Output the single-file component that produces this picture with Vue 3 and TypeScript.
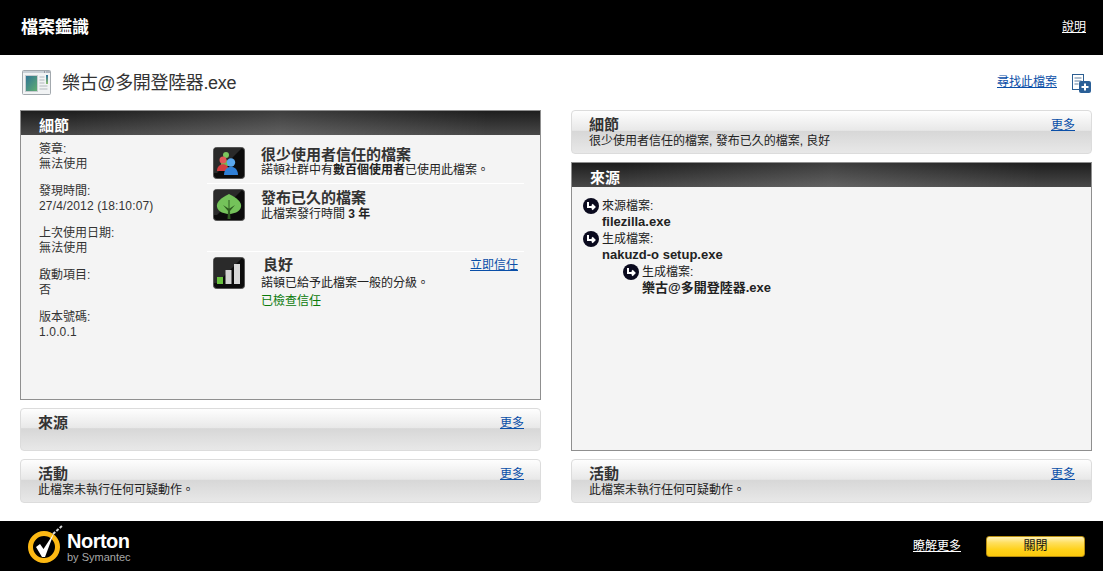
<script setup lang="ts">
interface Meta { label: string; value: string }
const meta: Meta[] = [
  { label: '簽章:', value: '無法使用' },
  { label: '發現時間:', value: '27/4/2012 (18:10:07)' },
  { label: '上次使用日期:', value: '無法使用' },
  { label: '啟動項目:', value: '否' },
  { label: '版本號碼:', value: '1.0.0.1' },
]
</script>

<template>
  <div class="page">
    <header class="top">
      <h1>檔案鑑識</h1>
      <a class="link white">說明</a>
    </header>

    <div class="titlebar">
      <svg class="fileicon" width="30" height="26" viewBox="0 0 30 26">
        <defs>
          <linearGradient id="pic" x1="0" y1="0" x2="1" y2="1">
            <stop offset="0" stop-color="#2f7296" />
            <stop offset="1" stop-color="#62b070" />
          </linearGradient>
          <linearGradient id="bar" x1="0" y1="0" x2="0" y2="1">
            <stop offset="0" stop-color="#2b6f9c" />
            <stop offset="1" stop-color="#8fbf70" />
          </linearGradient>
        </defs>
        <rect x="0.500" y="0.500" width="28" height="24" rx="1" fill="#f1f3f4" stroke="#a3a9ae" />
        <rect x="1" y="1" width="27" height="2" fill="#c9d0d6" />
        <path d="M22 2h1M24.500 2h1M26.500 2h1" stroke="#667" />
        <rect x="3.500" y="5.500" width="12" height="16" fill="url(#pic)" stroke="#c8cdd0" />
        <path d="M17.500 7h5M17.500 10h5M17.500 13h5M17.500 16h8M17.500 19h8" stroke="#b3b9be" />
        <rect x="24" y="5" width="2" height="9" fill="url(#bar)" />
      </svg>
      <span class="filename">樂古@多開登陸器.exe</span>
      <a class="link find">尋找此檔案</a>
      <svg class="addicon" width="20" height="20" viewBox="0 0 20 20">
        <rect x="0.500" y="0.500" width="11" height="15" fill="#fff" stroke="#2d5f92" />
        <path d="M2.500 4h7M2.500 7h7M2.500 10h4" stroke="#5f7f9f" />
        <rect x="7" y="7" width="12" height="12" rx="2" fill="#2a5f97" />
        <path d="M13 9.500v7M9.500 13h7" stroke="#fff" stroke-width="2" />
      </svg>
    </div>

    <main class="columns">
      <section class="col">
        <div class="panel open details">
          <h2 class="dark">細節</h2>
          <div class="detail-body">
            <dl class="meta">
              <div v-for="m in meta" :key="m.label" class="meta-item">
                <dt>{{ m.label }}</dt>
                <dd>{{ m.value }}</dd>
              </div>
            </dl>
            <div class="facts">
              <div class="fact first">
                <svg class="badge" viewBox="0 0 32 32" width="32" height="32">
                  <rect x="0.500" y="0.500" width="31" height="31" rx="3" fill="#0c0c0c" stroke="#555" />
                  <path d="M1 4a3 3 0 0 1 3-3H29 L4 26 H1Z" fill="#2a2a2a" />
                  <circle cx="13" cy="8" r="3" fill="#7cc65e" />
                  <path d="M8 17c0-5 10-5 10 0v2H8z" fill="#6dbb50" />
                  <circle cx="10" cy="13" r="3.500" fill="#e2585a" />
                  <path d="M4 24c0-9 12-9 12 0z" fill="#d33d40" />
                  <circle cx="18" cy="15.500" r="4.200" fill="#5aa8ee" />
                  <path d="M11 28c0-11 14-11 14 0z" fill="#2f7fd6" />
                </svg>
                <div class="fact-text">
                  <h3>很少使用者信任的檔案</h3>
                  <p>諾頓社群中有<b>數百個使用者</b>已使用此檔案。</p>
                </div>
              </div>
              <div class="fact second">
                <svg class="badge" viewBox="0 0 32 32" width="32" height="32">
                  <rect x="0.500" y="0.500" width="31" height="31" rx="3" fill="#0c0c0c" stroke="#555" />
                  <path d="M1 4a3 3 0 0 1 3-3H29 L4 26 H1Z" fill="#2a2a2a" />
                  <path d="M16 5 C24 9 29 13 28 18 C27 23 20 25 16 25 C12 25 5 23 4 18 C3 13 8 9 16 5Z" fill="#74c25a" />
                  <path d="M14.500 30 L15 22 L10 16 L15.500 19.500 V11 h1 V19.500 L22 16 L17 22 L17.500 30Z" fill="#2f5c22" />
                </svg>
                <div class="fact-text">
                  <h3>發布已久的檔案</h3>
                  <p>此檔案發行時間 <b>3 年</b></p>
                </div>
              </div>
              <div class="fact third">
                <svg class="badge" viewBox="0 0 32 32" width="32" height="32">
                  <rect x="0.500" y="0.500" width="31" height="31" rx="3" fill="#0c0c0c" stroke="#555" />
                  <path d="M1 4a3 3 0 0 1 3-3H29 L4 26 H1Z" fill="#2a2a2a" />
                  <rect x="4" y="20" width="6" height="7" fill="#69c23f" />
                  <rect x="12.500" y="13" width="6" height="14" fill="#d2d2d2" />
                  <rect x="21" y="7" width="6" height="20" fill="#d8d8d8" />
                </svg>
                <div class="fact-text">
                  <div class="fact-head">
                    <h3 class="indent">良好</h3>
                    <a class="link">立即信任</a>
                  </div>
                  <p>諾頓已給予此檔案一般的分級。</p>
                  <p class="green">已檢查信任</p>
                </div>
              </div>
            </div>
          </div>
        </div>

        <div class="panel closed short">
          <div class="closed-head">
            <h2>來源</h2>
            <a class="link">更多</a>
          </div>
        </div>

        <div class="panel closed">
          <div class="closed-head">
            <h2>活動</h2>
            <a class="link">更多</a>
          </div>
          <p>此檔案未執行任何可疑動作。</p>
        </div>
      </section>

      <section class="col">
        <div class="panel closed">
          <div class="closed-head">
            <h2>細節</h2>
            <a class="link">更多</a>
          </div>
          <p>很少使用者信任的檔案, 發布已久的檔案, 良好</p>
        </div>

        <div class="panel open source">
          <h2 class="dark">來源</h2>
          <div class="tree">
            <div class="node">
              <svg class="arrow" width="16" height="16" viewBox="0 0 16 16"><circle cx="8" cy="8" r="8" fill="#0a0a1e" /><path d="M5 4v5h6M9 6.500 11.500 9 9 11.500" fill="none" stroke="#fff" stroke-width="2" /></svg>
              <div><span>來源檔案:</span><b>filezilla.exe</b></div>
            </div>
            <div class="node">
              <svg class="arrow" width="16" height="16" viewBox="0 0 16 16"><circle cx="8" cy="8" r="8" fill="#0a0a1e" /><path d="M5 4v5h6M9 6.500 11.500 9 9 11.500" fill="none" stroke="#fff" stroke-width="2" /></svg>
              <div><span>生成檔案:</span><b>nakuzd-o setup.exe</b></div>
            </div>
            <div class="node nested">
              <svg class="arrow" width="16" height="16" viewBox="0 0 16 16"><circle cx="8" cy="8" r="8" fill="#0a0a1e" /><path d="M5 4v5h6M9 6.500 11.500 9 9 11.500" fill="none" stroke="#fff" stroke-width="2" /></svg>
              <div><span>生成檔案:</span><b>樂古@多開登陸器.exe</b></div>
            </div>
          </div>
        </div>

        <div class="panel closed">
          <div class="closed-head">
            <h2>活動</h2>
            <a class="link">更多</a>
          </div>
          <p>此檔案未執行任何可疑動作。</p>
        </div>
      </section>
    </main>

    <footer class="bottom">
      <div class="logo">
        <svg width="41" height="44" viewBox="0 0 41 44">
          <circle cx="18" cy="23" r="13.500" fill="none" stroke="#fdb913" stroke-width="5" />
          <path d="M10 23 L14 20 L17.500 25 L28 9 L19 33 L16 33 Z" fill="#fff" />
          <path d="M27 10 L37 1" stroke="#d8d8d8" stroke-width="2" stroke-dasharray="3 1.500" />
        </svg>
        <div class="wordmark">
          <span class="norton">Norton</span>
          <span class="sym">by Symantec</span>
        </div>
      </div>
      <a class="link white more">瞭解更多</a>
      <button class="close" type="button">關閉</button>
    </footer>
  </div>
</template>

<style>
html, body { margin: 0; background: #fff; }
</style>

<style scoped>
.page {
  width: 1103px;
  height: 571px;
  display: flex;
  flex-direction: column;
  overflow: hidden;
  font: 12px/15px "Liberation Sans", "Noto Sans CJK TC", sans-serif;
  color: #222;
}
h1, h2, h3, p, dl, dd { margin: 0; }
.link { color: #0a4fa8; text-decoration: underline; cursor: pointer; }
.link.white { color: #fff; }

.top {
  height: 55px;
  flex: none;
  background: #000;
  display: flex;
  align-items: center;
  justify-content: space-between;
  padding: 0 17px 0 21px;
}
.top h1 { font-size: 17px; font-weight: 700; color: #fff; }

.titlebar {
  height: 55px;
  flex: none;
  display: flex;
  align-items: center;
  padding: 0 11px 0 22px;
}
.fileicon { margin-right: 10px; }
.filename { font-size: 18px; line-height: 24px; color: #333; flex: 1; letter-spacing: -0.35px; }
.find { margin-right: 15px; }
.addicon { margin-top: 2px; }

.columns {
  flex: 1;
  display: grid;
  grid-template-columns: 521px 521px;
  column-gap: 30px;
  padding: 0 11px 0 20px;
}
.col { display: flex; flex-direction: column; gap: 8px; }

.panel { box-sizing: border-box; }
.open {
  border: 1px solid #8f8f8f;
  background: #f4f4f4;
}
.dark {
  height: 24px;
  box-sizing: border-box;
  padding: 6px 0 0 18px;
  font-size: 15px;
  line-height: 18px;
  font-weight: 700;
  color: #fff;
  background:
    linear-gradient(90deg, rgba(255, 255, 255, 0) 10%, rgba(255, 255, 255, 0.14) 50%, rgba(255, 255, 255, 0) 90%),
    linear-gradient(#1e1e1e, #484848);
}
.details { height: 290px; }
.source { height: 289px; }

.detail-body { display: flex; padding-top: 7px; }
.meta { width: 186px; padding-left: 18px; box-sizing: border-box; flex: none; }
.meta-item { margin-bottom: 12px; }
.meta-item dt, .meta-item dd { color: #333; }
.meta-item dd { letter-spacing: 0.15px; }

.facts { width: 317px; margin-top: 5px; flex: none; }
.fact { display: flex; align-items: flex-start; box-sizing: border-box; }
.fact.first { height: 37px; border-bottom: 1px solid #fff; }
.fact.second { height: 68px; padding-top: 5px; border-bottom: 1px solid #fff; }
.fact.second .fact-text { padding-top: 1px; }
.fact.second p { margin-top: 1px; }
.fact.third { padding-top: 5px; }
.fact.third p:first-of-type { margin-top: 3px; }
.badge { margin: 0 16px 0 6px; flex: none; }
.fact-text { flex: 1; padding-right: 6px; }
.fact-text h3 { font-size: 15px; line-height: 16px; font-weight: 700; color: #333; }
.fact-text h3.indent { padding-left: 2px; }
.fact-head { display: flex; justify-content: space-between; align-items: center; }
.fact-text p { line-height: 15px; }
.fact-text b { font-weight: 700; }
.fact-text p.green { color: #0a7a0a; margin-top: 3px; }

.closed {
  height: 44px;
  border: 1px solid #dcdcdc;
  border-radius: 4px;
  padding: 5px 16px 0 17px;
  background: linear-gradient(#fefefe 0, #e8e8e8 46%, #d7d7d7 48%, #e8e8e8 100%);
}
.short { height: 43px; }
.closed-head {
  display: flex;
  justify-content: space-between;
  align-items: flex-start;
}
.closed-head h2 { font-size: 15px; line-height: 18px; font-weight: 700; color: #333; }
.closed-head .link { padding-top: 2px; }
.closed p { line-height: 14px; }

.tree { padding: 11px 0 0 11px; display: flex; flex-direction: column; }
.node { display: flex; align-items: flex-start; gap: 3px; margin-top: 1px; line-height: 16px; }
.node:first-child { margin-top: 0; }
.node > div { display: flex; flex-direction: column; }
.node b { font-weight: 700; font-size: 13px; color: #222; }
.node.nested { margin-left: 40px; }
.arrow { flex: none; }

.bottom {
  height: 50px;
  flex: none;
  background: #000;
  display: flex;
  align-items: center;
  padding: 0 18px 0 26px;
}
.logo { display: flex; align-items: center; flex: 1; }
.wordmark { display: flex; flex-direction: column; margin-top: 3px; }
.norton { font: 700 20px/20px "Liberation Sans", sans-serif; color: #fff; letter-spacing: -0.5px; }
.sym { font: 11px/13px "Liberation Sans", sans-serif; color: #a8a8a8; }
.more { margin-right: 25px; }
.close {
  width: 99px;
  height: 21px;
  padding: 0;
  border: 1px solid #b98f10;
  border-radius: 3px;
  background: linear-gradient(#fff3b8 0, #ffdf5e 30%, #ffd21c 65%, #fcc80c 100%);
  font: 12px/15px "Liberation Sans", "Noto Sans CJK TC", sans-serif;
  color: #111;
}
</style>
